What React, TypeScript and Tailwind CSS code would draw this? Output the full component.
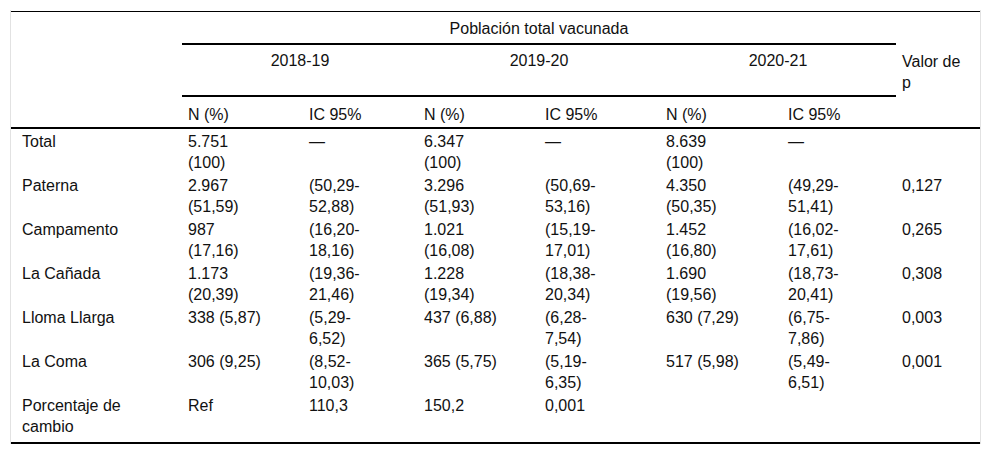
import { Fragment } from "react";

type Row = {
  label: string;
  cells: string[];
  p: string;
};

const rows: Row[] = [
  {
    label: "Total",
    cells: ["5.751\n(100)", "—", "6.347\n(100)", "—", "8.639\n(100)", "—"],
    p: "",
  },
  {
    label: "Paterna",
    cells: [
      "2.967\n(51,59)",
      "(50,29-\n52,88)",
      "3.296\n(51,93)",
      "(50,69-\n53,16)",
      "4.350\n(50,35)",
      "(49,29-\n51,41)",
    ],
    p: "0,127",
  },
  {
    label: "Campamento",
    cells: [
      "987\n(17,16)",
      "(16,20-\n18,16)",
      "1.021\n(16,08)",
      "(15,19-\n17,01)",
      "1.452\n(16,80)",
      "(16,02-\n17,61)",
    ],
    p: "0,265",
  },
  {
    label: "La Cañada",
    cells: [
      "1.173\n(20,39)",
      "(19,36-\n21,46)",
      "1.228\n(19,34)",
      "(18,38-\n20,34)",
      "1.690\n(19,56)",
      "(18,73-\n20,41)",
    ],
    p: "0,308",
  },
  {
    label: "Lloma Llarga",
    cells: [
      "338 (5,87)",
      "(5,29-\n6,52)",
      "437 (6,88)",
      "(6,28-\n7,54)",
      "630 (7,29)",
      "(6,75-\n7,86)",
    ],
    p: "0,003",
  },
  {
    label: "La Coma",
    cells: [
      "306 (9,25)",
      "(8,52-\n10,03)",
      "365 (5,75)",
      "(5,19-\n6,35)",
      "517 (5,98)",
      "(5,49-\n6,51)",
    ],
    p: "0,001",
  },
  {
    label: "Porcentaje de\ncambio",
    cells: ["Ref", "110,3", "150,2", "0,001", "", ""],
    p: "",
  },
];

const seasons = ["2018-19", "2019-20", "2020-21"];

export default function App() {
  return (
    <div className="min-h-[455px] bg-white pl-[10px] pt-[10px] font-['Liberation_Sans',Arial,sans-serif] text-[16px] leading-[21px] text-[#111]">
      <div className="w-[971px] border-x border-[#e2e2e2] pt-px">
        <div className="grid grid-cols-[171px_121px_115px_121px_121px_122px_114px_84px] grid-rows-[33px_52px_32px] border-t border-b-2 border-black">
          {/* header */}
          <div className="row-span-3 border-b-2 border-black" />
          <div className="col-span-6 h-[33px] border-b-2 border-black pt-[6px] text-center">
            Población total vacunada
          </div>
          <div className="row-span-3 flex items-center border-b-2 border-black pl-[6px] pt-[5px]">
            Valor de
            <br />p
          </div>
          {seasons.map((s) => (
            <div
              key={s}
              className="col-span-2 h-[52px] border-b-2 border-black pt-[5px] text-center"
            >
              {s}
            </div>
          ))}
          {seasons.map((s) => (
            <Fragment key={s}>
              <div className="h-[32px] border-b-2 border-black pl-[6px] pt-[7px]">N (%)</div>
              <div className="h-[32px] border-b-2 border-black pl-[6px] pt-[7px]">IC 95%</div>
            </Fragment>
          ))}

          {/* body */}
          {rows.map((row, i) => {
            const last = i === rows.length - 1;
            const cell = last
              ? "whitespace-pre-line pt-[2px] pb-[5px]"
              : "whitespace-pre-line h-[44px] pt-[2px]";
            return (
              <div key={row.label} className="contents">
                <div className={`${cell} pl-[11px]`}>{row.label}</div>
                {row.cells.map((c, j) => (
                  <div key={j} className={`${cell} pl-[6px]`}>
                    {c}
                  </div>
                ))}
                <div className={`${cell} pl-[6px]`}>{row.p}</div>
              </div>
            );
          })}
        </div>
      </div>
    </div>
  );
}
